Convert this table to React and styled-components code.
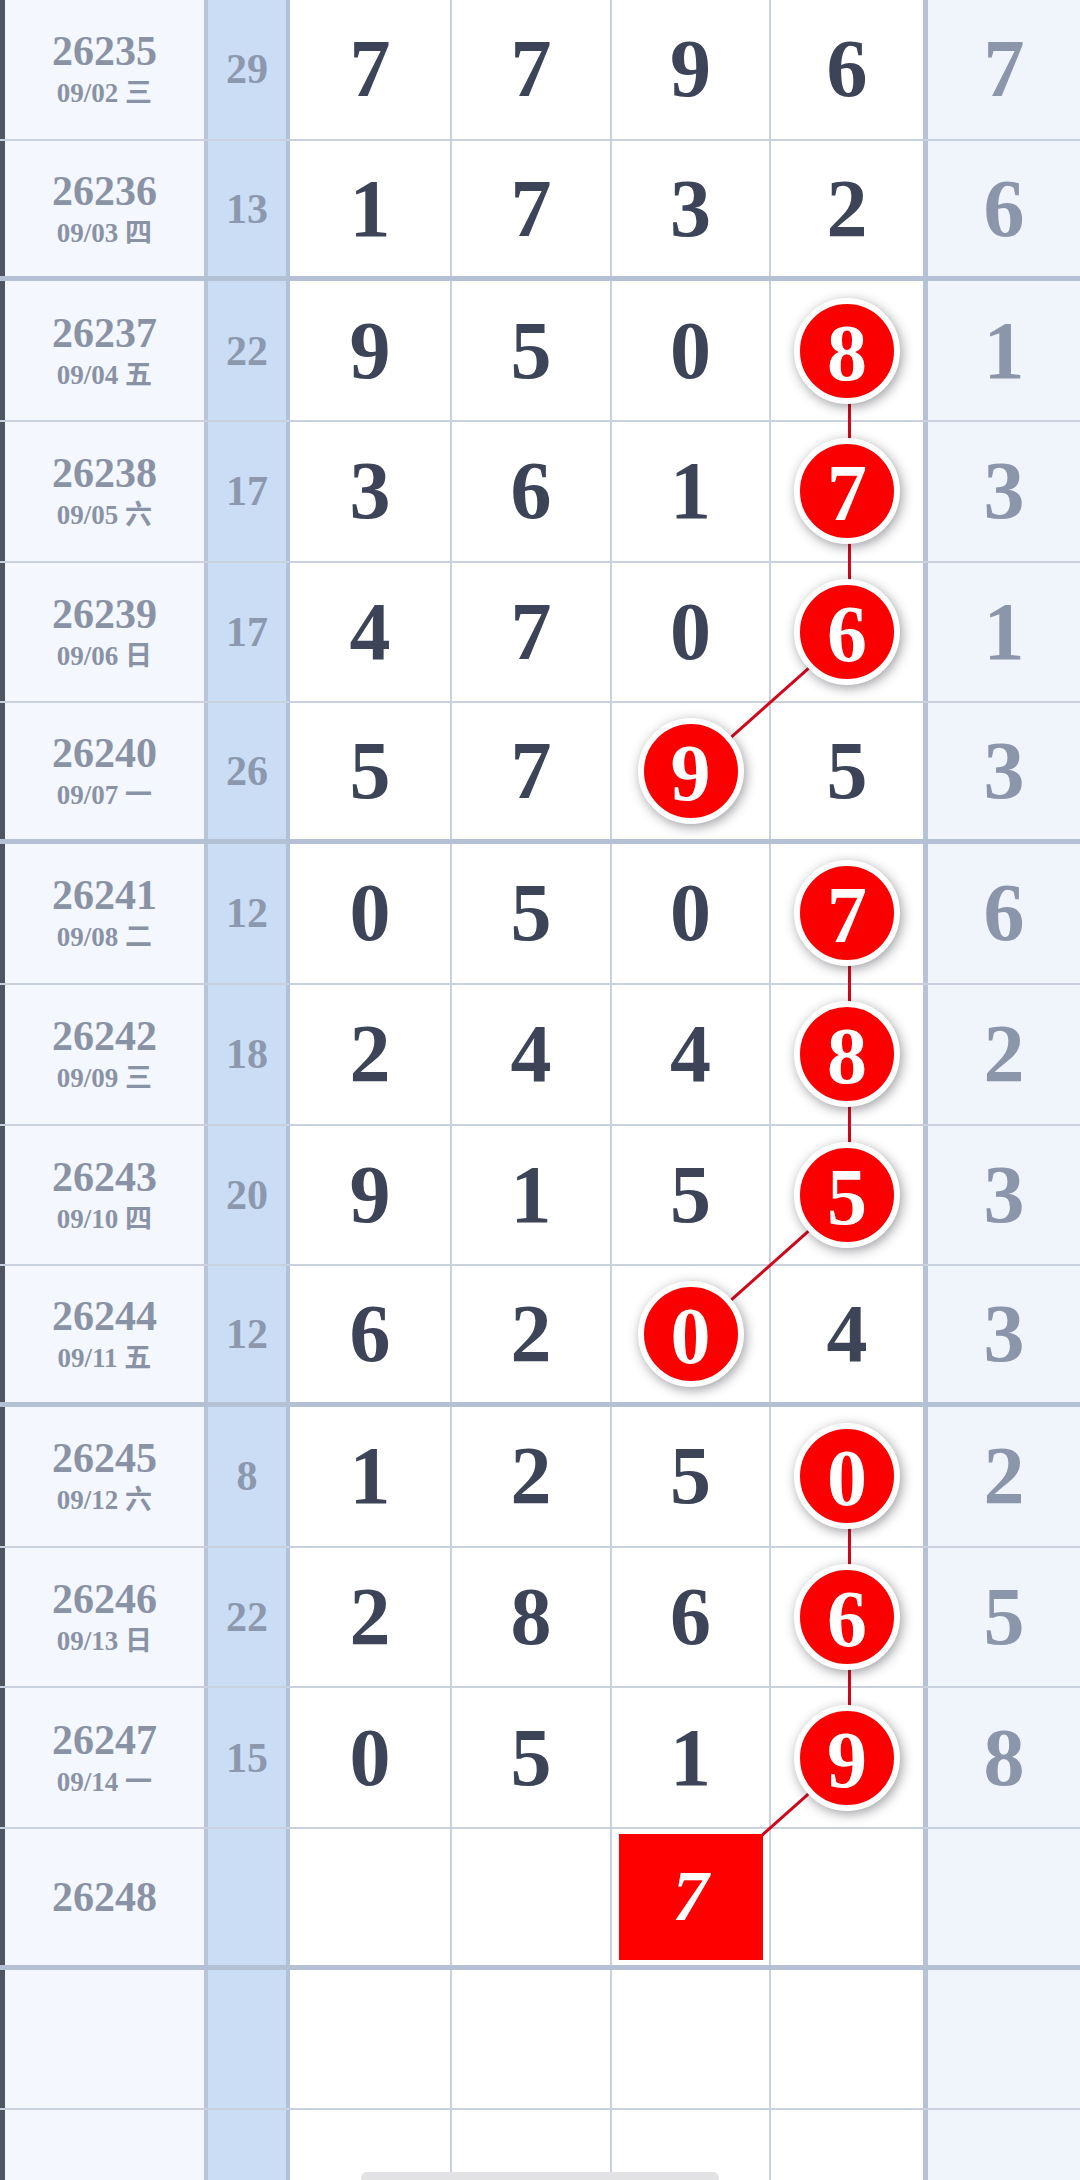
import React from 'react';
import styled, { createGlobalStyle } from 'styled-components';

const ROW_H = 140.7;
const COLS = [208, 82, 162, 160, 159, 157];
const colLeft = (i) => COLS.slice(0, i).reduce((a, b) => a + b, 0);
// center x of a digit column (0..3)
const digitX = (d) => colLeft(2 + d) + COLS[2 + d] / 2;
const rowY = (r) => r * ROW_H + 69;

const GlobalStyle = createGlobalStyle`
  html, body {
    margin: 0;
    padding: 0;
    background: #ffffff;
    overflow: hidden;
  }
  body {
    font-family: "Liberation Serif", "Noto Sans CJK SC", serif;
  }
`;

const Page = styled.div`
  position: relative;
  width: 1080px;
  height: 2180px;
  overflow: hidden;
  background: #ffffff;
`;

const Table = styled.div`
  position: relative;
`;

const Row = styled.div`
  display: grid;
  grid-template-columns: ${COLS.map((c) => c + 'px').join(' ')} 1fr;
  height: ${ROW_H}px;
  box-sizing: border-box;
  border-bottom: ${(p) => (p.$thick ? '5px solid #b4c0d4' : '2px solid #c9d1de')};
`;

const IssueCell = styled.div`
  display: flex;
  flex-direction: column;
  align-items: center;
  justify-content: center;
  background: #f4f7fd;
  border-left: 5px solid #4f5562;
  border-right: 4px solid #b8c4d7;
  color: #8a93a5;
  font-weight: 700;
`;

const Issue = styled.div`
  font-size: 42px;
  line-height: 46px;
`;

const DateLine = styled.div`
  font-size: 27px;
  line-height: 34px;
  margin-top: 2px;
  font-family: "Liberation Serif", "Noto Sans CJK SC", serif;
`;

const SumCell = styled.div`
  display: flex;
  align-items: center;
  justify-content: center;
  background: #cbdcf5;
  border-right: 4px solid #b3c1d6;
  color: #8c98ad;
  font-size: 42px;
  font-weight: 700;
`;

const DigitCell = styled.div`
  display: flex;
  align-items: center;
  justify-content: center;
  background: #ffffff;
  border-right: ${(p) => (p.$edge ? '5px solid #b6c2d6' : '2px solid #c9d1de')};
  color: #3d4457;
  font-size: 82px;
  font-weight: 700;
`;

const TailCell = styled.div`
  display: flex;
  align-items: center;
  justify-content: center;
  background: #f0f4fb;
  color: #8b96aa;
  font-size: 82px;
  font-weight: 700;
`;

const Ball = styled.div`
  position: relative;
  z-index: 2;
  width: 106px;
  height: 106px;
  box-sizing: border-box;
  border-radius: 50%;
  background: #fb0000;
  border: 6px solid #ffffff;
  box-shadow: 2px 3px 12px rgba(40, 40, 50, 0.45);
  color: #ffffff;
  display: flex;
  align-items: center;
  justify-content: center;
  font-size: 80px;
  line-height: 1;
  padding-top: 4px;
`;

const Square = styled.div`
  position: relative;
  z-index: 2;
  width: 144px;
  height: 126px;
  background: #ff0000;
  color: #ffffff;
  display: flex;
  align-items: center;
  justify-content: center;
  font-size: 72px;
  font-style: italic;
  font-weight: 700;
`;

const Lines = styled.svg`
  position: absolute;
  top: 0;
  left: 0;
  z-index: 1;
  pointer-events: none;
`;

const HomeBar = styled.div`
  position: absolute;
  bottom: -4px;
  left: 361px;
  width: 358px;
  height: 12px;
  border-radius: 6px;
  background: #e2e2e4;
  z-index: 3;
`;

const rows = [
  { no: '26235', date: '09/02 三', sum: 29, d: [7, 7, 9, 6], tail: 7 },
  { no: '26236', date: '09/03 四', sum: 13, d: [1, 7, 3, 2], tail: 6 },
  { no: '26237', date: '09/04 五', sum: 22, d: [9, 5, 0, 8], tail: 1, hit: 3 },
  { no: '26238', date: '09/05 六', sum: 17, d: [3, 6, 1, 7], tail: 3, hit: 3 },
  { no: '26239', date: '09/06 日', sum: 17, d: [4, 7, 0, 6], tail: 1, hit: 3 },
  { no: '26240', date: '09/07 一', sum: 26, d: [5, 7, 9, 5], tail: 3, hit: 2 },
  { no: '26241', date: '09/08 二', sum: 12, d: [0, 5, 0, 7], tail: 6, hit: 3 },
  { no: '26242', date: '09/09 三', sum: 18, d: [2, 4, 4, 8], tail: 2, hit: 3 },
  { no: '26243', date: '09/10 四', sum: 20, d: [9, 1, 5, 5], tail: 3, hit: 3 },
  { no: '26244', date: '09/11 五', sum: 12, d: [6, 2, 0, 4], tail: 3, hit: 2 },
  { no: '26245', date: '09/12 六', sum: 8, d: [1, 2, 5, 0], tail: 2, hit: 3 },
  { no: '26246', date: '09/13 日', sum: 22, d: [2, 8, 6, 6], tail: 5, hit: 3 },
  { no: '26247', date: '09/14 一', sum: 15, d: [0, 5, 1, 9], tail: 8, hit: 3 },
  { no: '26248', forecast: { col: 2, value: 7 } },
  { empty: true },
  { empty: true },
];

// lines between hits, only inside each block of four draws
const segments = [];
rows.forEach((r, i) => {
  const next = rows[i + 1];
  if (!next || r.hit === undefined) return;
  const nextCol = next.hit !== undefined ? next.hit : next.forecast ? next.forecast.col : undefined;
  if (nextCol === undefined) return;
  if (Number(r.no) % 4 === 0) return;
  segments.push([digitX(r.hit), rowY(i), digitX(nextCol), rowY(i + 1)]);
});

const App = () => {
  return (
    <>
      <GlobalStyle />
      <Page>
        <Table>
          {rows.map((r, i) => {
            const thick = r.no ? Number(r.no) % 4 === 0 : false;
            return (
              <Row key={i} $thick={thick}>
                <IssueCell>
                  {r.no && <Issue>{r.no}</Issue>}
                  {r.date && <DateLine>{r.date}</DateLine>}
                </IssueCell>
                <SumCell>{r.sum}</SumCell>
                {[0, 1, 2, 3].map((c) => (
                  <DigitCell key={c} $edge={c === 3}>
                    {r.d && (r.hit === c ? <Ball>{r.d[c]}</Ball> : r.d[c])}
                    {r.forecast && r.forecast.col === c && <Square>{r.forecast.value}</Square>}
                  </DigitCell>
                ))}
                <TailCell>{r.tail}</TailCell>
              </Row>
            );
          })}
          <Lines width="1080" height={rows.length * ROW_H}>
            {segments.map(([x1, y1, x2, y2], k) => (
              <line key={k} x1={x1} y1={y1} x2={x2} y2={y2} stroke="#d0061a" strokeWidth="3" />
            ))}
          </Lines>
        </Table>
        <HomeBar />
      </Page>
    </>
  );
};

export default App;
